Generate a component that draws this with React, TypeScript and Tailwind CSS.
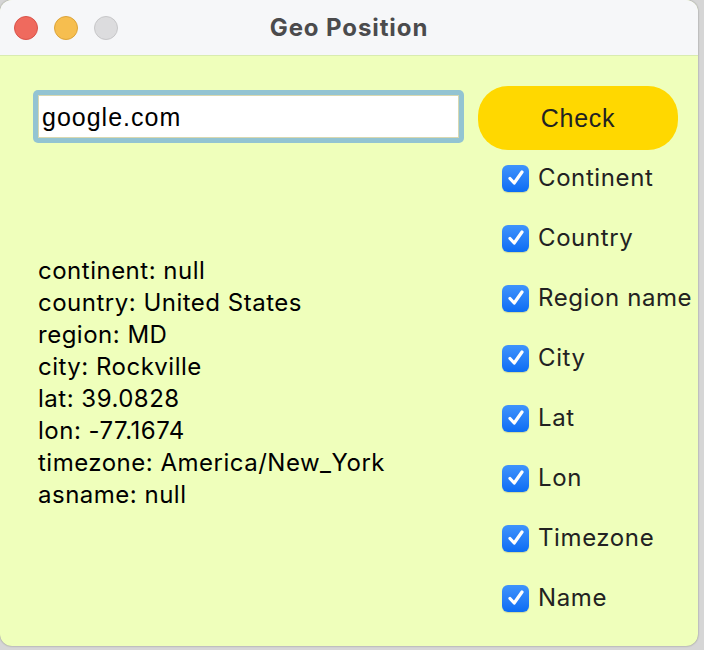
import React from "react";

const labels = ["Continent", "Country", "Region name", "City", "Lat", "Lon", "Timezone", "Name"];
const lines = [
  "continent: null",
  "country: United States",
  "region: MD",
  "city: Rockville",
  "lat: 39.0828",
  "lon: -77.1674",
  "timezone: America/New_York",
  "asname: null",
];

function Check() {
  return (
    <div className="w-[27px] h-[27px] rounded-[6px] bg-gradient-to-b from-[#3f93fb] to-[#0a6cf4] flex items-center justify-center shrink-0 shadow-[0_1px_1px_rgba(0,0,0,0.15)]">
      <svg width="20" height="20" viewBox="0 0 20 20">
        <path d="M4 10.5 L8.2 15 L16 4" fill="none" stroke="white" strokeWidth="3.2" strokeLinecap="round" strokeLinejoin="round" />
      </svg>
    </div>
  );
}

export default function App() {
  return (
    <div className="w-[704px] h-[650px] bg-[#d6d6d6] overflow-hidden" style={{ fontFamily: "Inter, 'Noto Sans', sans-serif" }}>
      <div className="w-[698px] h-[646px] rounded-[12px] overflow-hidden flex flex-col bg-[#efffbb] shadow-[0_0_2px_rgba(0,0,0,0.4)]">
        <div className="h-[56px] bg-[#f6f7f9] border-b border-[#d9ecb0] flex items-center relative shrink-0">
          <div className="flex gap-[16px] pl-[14px]">
            <div className="w-[24px] h-[24px] rounded-full bg-[#ef6a5e] border border-[#d9534a]" />
            <div className="w-[24px] h-[24px] rounded-full bg-[#f6be4f] border border-[#dca43a]" />
            <div className="w-[24px] h-[24px] rounded-full bg-[#dcdcde] border border-[#c7c7c9]" />
          </div>
          <div className="absolute inset-0 flex items-center justify-center text-[24px] tracking-[0.9px] font-bold text-[#4b4b4d] pointer-events-none">
            Geo Position
          </div>
        </div>
        <div className="flex flex-1">
          <div className="w-[478px] pl-[33px] pt-[34px] flex flex-col">
            <div className="w-[431px] h-[53px] rounded-[5px] bg-[#93c4d2] p-[5px]">
              <div className="w-full h-full bg-white border border-[#d8d8b0] flex items-center pl-[3px] pt-[2px] text-[25px] tracking-[1px] text-black" style={{ fontFamily: "'Liberation Sans', Arial, sans-serif" }}>
                google.com
              </div>
            </div>
            <div className="mt-[112px] pl-[5px] text-[24px] tracking-[0.5px] leading-[32px] text-black">
              {lines.map((l) => (
                <div key={l}>{l}</div>
              ))}
            </div>
          </div>
          <div className="flex flex-col pt-[30px]">
            <div className="w-[200px] h-[64px] rounded-[30px] bg-[#ffd800] flex items-center justify-center pt-[2px] text-[25px] tracking-[0.7px] text-[#222]" style={{ fontFamily: "'Liberation Sans', Arial, sans-serif" }}>
              Check
            </div>
            <div className="flex flex-col gap-[32px] mt-[14px] pl-[24px]">
              {labels.map((l) => (
                <div key={l} className="flex items-center gap-[9px] h-[28px] text-[24px] tracking-[0.6px] text-[#222]">
                  <Check />
                  <span>{l}</span>
                </div>
              ))}
            </div>
          </div>
        </div>
      </div>
    </div>
  );
}
